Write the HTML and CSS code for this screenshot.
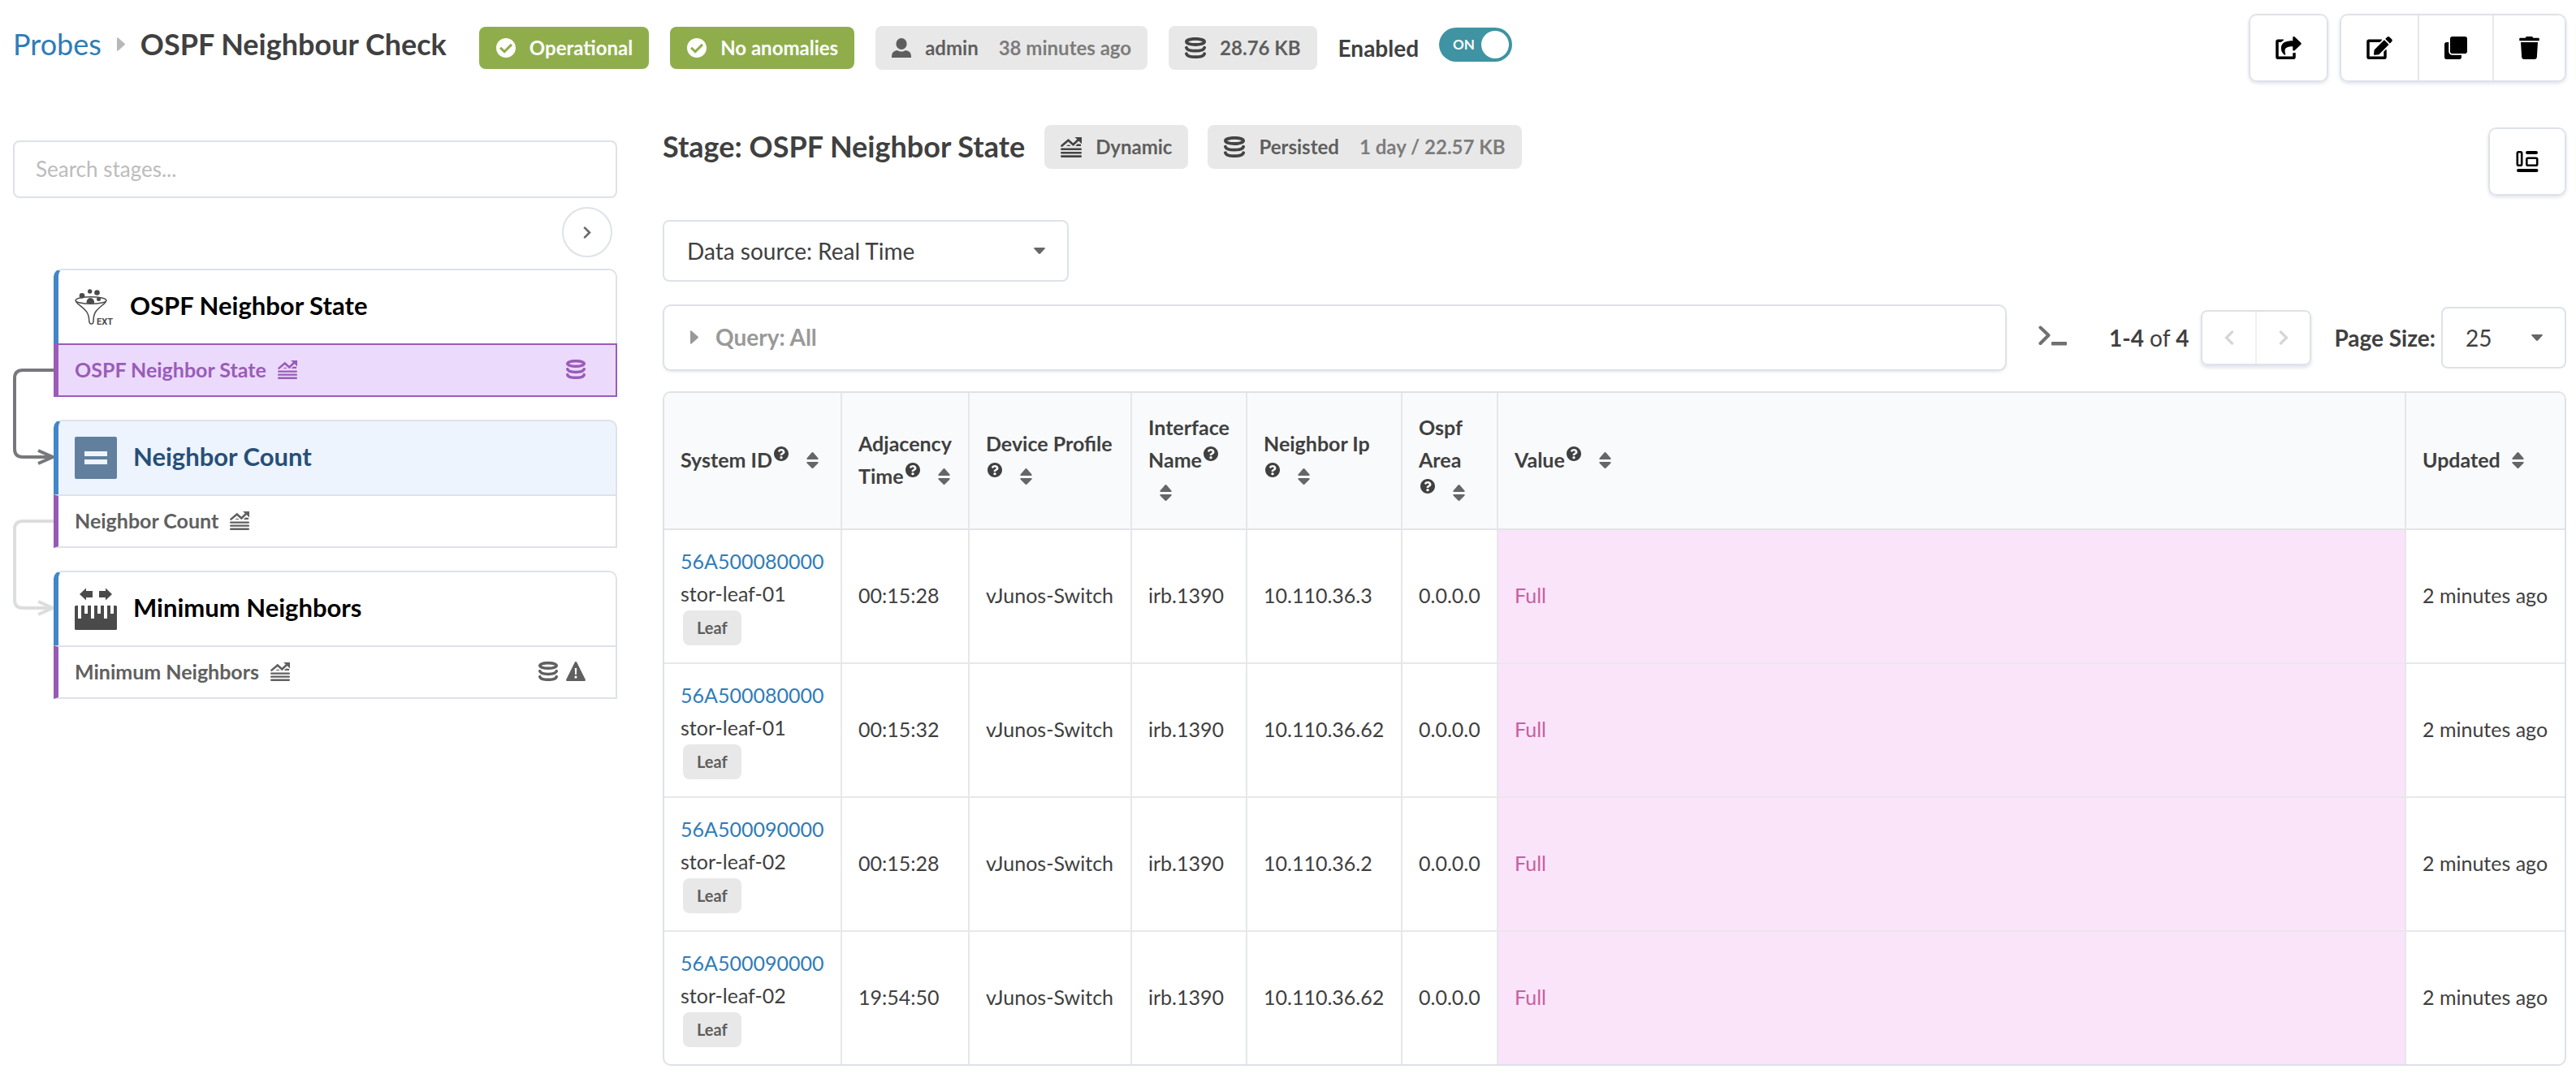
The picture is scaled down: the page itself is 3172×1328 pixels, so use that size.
FILE: index.html
```html
<!DOCTYPE html>
<html lang="en">
<head>
<meta charset="utf-8">
<title>OSPF Neighbour Check</title>
<link rel="stylesheet" href="styles.css">
</head>
<body>
<svg class="sprite" aria-hidden="true">
  <symbol id="check" viewBox="8 8 496 496"><path d="M504 256c0 136.967-111.033 248-248 248S8 392.967 8 256 119.033 8 256 8s248 111.033 248 248zM227.314 387.314l184-184c6.248-6.248 6.248-16.379 0-22.627l-22.627-22.627c-6.248-6.249-16.379-6.249-22.628 0L216 308.118l-70.059-70.059c-6.248-6.248-16.379-6.248-22.628 0l-22.627 22.627c-6.248 6.248-6.248 16.379 0 22.627l104 104c6.249 6.249 16.379 6.249 22.628.001z"/></symbol>
  <symbol id="user" viewBox="0 0 24 24"><ellipse cx="12" cy="7" rx="6.6" ry="7"/><path d="M7 15q5 3 10 0q7 1 7 7v2H0v-2q0-6 7-7z"/></symbol>
  <symbol id="db" viewBox="0 0 26 26"><g fill="none" stroke="currentColor" stroke-width="3.8" stroke-linecap="round"><ellipse cx="13" cy="5.400" rx="11.100" ry="3.600"/><path d="M1.900 12.700C3.500 18 22.500 18 24.100 12.700M1.900 20.200C3.500 25.500 22.500 25.500 24.100 20.200"/></g></symbol>
  <symbol id="chart" viewBox="0 0 26 26"><path d="M1.600 11.500 9.500 4.800l6 5.400L23 3" fill="none" stroke="currentColor" stroke-width="2.800" stroke-linecap="round"/><path d="M17.500 1H26v8.200zM7 12q3-2.800 5.500 0zM18 12l3-2.800 4 .5V12z"/><path d="M1.300 15.800h23.400M1.300 20.200h23.400M1.300 24.600h23.400" stroke="currentColor" stroke-width="2.600" stroke-linecap="round"/></symbol>
  <symbol id="share" viewBox="0 0 576 512"><path d="M568.482 177.448L424.479 313.433C409.3 327.768 384 317.14 384 295.985v-71.963c-144.575.97-205.566 35.113-164.775 171.353 4.483 14.973-12.846 26.567-25.006 17.33C155.252 383.105 120 326.488 120 269.339c0-143.937 117.599-172.5 264-173.312V24.012c0-21.174 25.317-31.768 40.479-17.448l144.003 135.988c10.02 9.463 10.028 25.425 0 34.896zM384 379.128V448H64V128h50.916a11.99 11.99 0 0 0 8.648-3.693c14.953-15.568 32.237-27.89 51.014-37.676C185.708 80.83 181.584 64 169.033 64H48C21.49 64 0 85.49 0 112v352c0 26.51 21.49 48 48 48h352c26.51 0 48-21.49 48-48v-88.806c0-8.288-8.197-14.066-16.011-11.302a71.83 71.83 0 0 1-34.189 3.377c-7.27-1.046-13.8 4.514-13.8 11.859z"/></symbol>
  <symbol id="edit" viewBox="0 0 576 512"><path d="M402.6 83.2l90.2 90.2c3.8 3.8 3.8 10 0 13.8L274.4 405.6l-92.8 10.3c-12.4 1.4-22.9-9.1-21.5-21.5l10.3-92.8L388.8 83.2c3.8-3.8 10-3.8 13.8 0zm162-22.9l-48.8-48.8c-15.2-15.2-39.9-15.2-55.2 0l-35.4 35.4c-3.8 3.8-3.8 10 0 13.8l90.2 90.2c3.8 3.8 10 3.8 13.8 0l35.4-35.4c15.2-15.3 15.2-40 0-55.2zM384 346.2V448H64V128h229.8c3.2 0 6.2-1.3 8.5-3.5l40-40c7.6-7.6 2.2-20.5-8.5-20.5H48C21.5 64 0 85.5 0 112v352c0 26.5 21.5 48 48 48h352c26.5 0 48-21.5 48-48V306.2c0-10.7-12.9-16-20.5-8.500l-40 40c-2.200 2.300-3.500 5.300-3.500 8.500z"/></symbol>
  <symbol id="clone" viewBox="0 0 512 512"><path d="M464 0c26.510 0 48 21.490 48 48v288c0 26.510-21.490 48-48 48H176c-26.510 0-48-21.490-48-48V48c0-26.510 21.490-48 48-48h288M176 416c-44.112 0-80-35.888-80-80V128H48c-26.510 0-48 21.490-48 48v288c0 26.510 21.490 48 48 48h288c26.510 0 48-21.490 48-48v-48H176z"/></symbol>
  <symbol id="trash" viewBox="0 0 448 512"><path d="M432 32H312l-9.400-18.700A24 24 0 0 0 281.100 0H166.800a23.720 23.720 0 0 0-21.400 13.300L136 32H16A16 16 0 0 0 0 48v32a16 16 0 0 0 16 16h416a16 16 0 0 0 16-16V48a16 16 0 0 0-16-16zM53.200 467a48 48 0 0 0 47.900 45h245.800a48 48 0 0 0 47.900-45L416 128H32z"/></symbol>
  <symbol id="layout" viewBox="0 0 27 26"><g fill="none" stroke="currentColor" stroke-width="2.600"><rect x="1.300" y="1.300" width="5.400" height="16.400" rx="1.500"/><rect x="12.800" y="8.800" width="12.900" height="8.900" rx="1.500"/></g><path d="M13.500 2h11M2.500 24h22.500" stroke="currentColor" stroke-width="4" stroke-linecap="round"/></symbol>
  <symbol id="help" viewBox="8 8 496 496"><path d="M504 256c0 136.997-111.043 248-248 248S8 392.997 8 256C8 119.083 119.043 8 256 8s248 111.083 248 248zM262.655 90c-54.497 0-89.255 22.957-116.549 63.758-3.536 5.286-2.353 12.415 2.715 16.258l34.699 26.310c5.205 3.947 12.621 3.008 16.665-2.122 17.864-22.658 30.113-35.797 57.303-35.797 20.429 0 45.698 13.148 45.698 32.958 0 14.976-12.363 22.667-32.534 33.976C247.128 238.528 216 254.941 216 296v4c0 6.627 5.373 12 12 12h56c6.627 0 12-5.373 12-12v-1.333c0-28.462 83.186-29.647 83.186-106.667 0-58.002-60.165-102-116.531-102zM256 338c-25.365 0-46 20.635-46 46 0 25.364 20.635 46 46 46s46-20.636 46-46c0-25.365-20.635-46-46-46z"/></symbol>
  <symbol id="sort" viewBox="0 0 15 20"><path d="M7.500 0q.6 0 1 .5l6 7q.8 1.500-1 1.500h-12q-1.800 0-1-1.500l6-7q.4-.5 1-.5zM7.500 20q.6 0 1-.5l6-6q.8-1.500-1-1.500h-12q-1.800 0-1 1.500l6 6q.4.5 1 .5z"/></symbol>
  <symbol id="caret" viewBox="0 0 14 8"><path d="M1 0h12q1.500.5.5 1.600L8 7.500q-1 .8-2 0L.5 1.600Q-.5.500 1 0z"/></symbol>
  <symbol id="tri" viewBox="0 0 10 17"><path d="M0 1q.2-1.200 1.400-.5l8 7q1 1 0 2l-8 7q-1.200.7-1.400-.5z"/></symbol>
  <symbol id="chev" viewBox="0 0 12 18"><path d="m2.500 2 7 7-7 7" fill="none" stroke="currentColor" stroke-width="3.200" stroke-linecap="round"/></symbol>
  <symbol id="chevleft" viewBox="0 0 12 18"><path d="m9.500 2-7 7 7 7" fill="none" stroke="currentColor" stroke-width="3.200" stroke-linecap="round"/></symbol>
  <symbol id="terminal" viewBox="0 0 35 26"><path d="m2.500 2.500 10 9.500-10 10" fill="none" stroke="currentColor" stroke-width="4" stroke-linecap="round" stroke-linejoin="round"/><rect x="16" y="20" width="19" height="4.500" rx="1"/></symbol>
  <symbol id="warn" viewBox="0 0 24 24"><path fill-rule="evenodd" d="M12 0q.8 0 1.300 1L24 22.500q0 1.500-1.500 1.500h-21Q0 24 0 22.500L10.700 1Q11.200 0 12 0zM10.800 8l.3 8h1.800l.3-8zM12 17.500a1.600 1.600 0 1 0 0 3.200 1.600 1.600 0 1 0 0-3.200z"/></symbol>
  <symbol id="equal" viewBox="0 0 52 52"><path fill-rule="evenodd" d="M2 0h48q2 0 2 2v48q0 2-2 2H2q-2 0-2-2V2Q0 0 2 0zM12 18v6h28v-6zM12 28v6h28v-6z"/></symbol>
  <symbol id="ruler" viewBox="0 0 52 52"><path d="M6 8l8-7.500V4h8v8h-8v3.500zM46 8l-8-7.500V4h-8v8h8v3.500zM1.500 22H4v16h4V22h4v10h4V22h4v16h4V22h4v10h4V22h4v16h4V22h4v10h4V22h2.500Q52 22 52 23.500v27q0 1.500-1.500 1.500h-49Q0 52 0 50.500v-27Q0 22 1.500 22z"/></symbol>
</svg>

<header class="topbar">
  <nav class="crumbs">
    <a href="#probes">Probes</a>
    <svg class="crumb-sep"><use href="#tri"/></svg>
    <h1>OSPF Neighbour Check</h1>
  </nav>
  <div class="labels">
    <span class="label ok"><svg><use href="#check"/></svg>Operational</span>
    <span class="label ok"><svg><use href="#check"/></svg>No anomalies</span>
    <span class="label"><svg><use href="#user"/></svg>admin<span class="detail">38 minutes ago</span></span>
    <span class="label"><svg class="dark"><use href="#db"/></svg>28.76 KB</span>
    <label class="toggle">Enabled
      <span class="switch"><input type="checkbox" checked><span class="on">ON</span></span>
    </label>
  </div>
  <div class="actions">
    <div class="group"><button type="button" aria-label="Export"><svg class="w32"><use href="#share"/></svg></button></div>
    <div class="group">
      <button type="button" aria-label="Edit"><svg class="w32"><use href="#edit"/></svg></button>
      <button type="button" aria-label="Clone"><svg class="w28"><use href="#clone"/></svg></button>
      <button type="button" aria-label="Delete"><svg class="w25"><use href="#trash"/></svg></button>
    </div>
  </div>
</header>

<div class="columns">
  <aside class="stages">
    <input class="search" type="text" placeholder="Search stages..." aria-label="Search stages">
    <button class="expand" type="button" aria-label="Expand"><svg><use href="#chev"/></svg></button>
    <div class="flow">
      <svg class="links" viewBox="0 0 50 530" aria-hidden="true">
        <g class="link"><path d="M50 125H12Q2 125 2 135V222Q2 232 12 232H48"/><path d="M31 224 49 232 31 240"/></g>
        <g class="link faint"><path d="M50 311H12Q2 311 2 321V408Q2 418 12 418H48"/><path d="M31 410 49 418 31 426"/></g>
      </svg>
      <div class="cards">
        <section class="card">
          <h2>
            <svg class="funnel" viewBox="0 0 48 44">
              <g fill="none" stroke="currentColor" stroke-width="1.500"><ellipse cx="20" cy="14" rx="19" ry="4.300"/><path d="M1.500 15.500C7 23 17.500 24 17.800 39.500q.2 3.500 2.700 3.500t2.500-3.500C23 24 33 23 38.500 15.500"/></g>
              <circle cx="9" cy="8.300" r="3.300"/><circle cx="18.700" cy="3" r="2.700"/><circle cx="27.500" cy="4.500" r="3.300"/><circle cx="29.500" cy="12.500" r="2.500"/><path d="M14.500 17.500q0-6.500 4.800-6.500t4.800 6.500q-5 .8-9.600 0z"/>
              <text x="27" y="43.500">EXT</text>
            </svg>
            OSPF Neighbor State</h2>
          <div class="output selected">OSPF Neighbor State<svg><use href="#chart"/></svg><span class="flags"><svg><use href="#db"/></svg></span></div>
        </section>
        <section class="card current">
          <h2><svg class="big"><use href="#equal"/></svg>Neighbor Count</h2>
          <div class="output">Neighbor Count<svg><use href="#chart"/></svg></div>
        </section>
        <section class="card">
          <h2><svg class="big"><use href="#ruler"/></svg>Minimum Neighbors</h2>
          <div class="output">Minimum Neighbors<svg><use href="#chart"/></svg><span class="flags"><svg><use href="#db"/></svg><svg><use href="#warn"/></svg></span></div>
        </section>
      </div>
    </div>
  </aside>

  <main>
    <div class="stage-head">
      <div class="stage-title">
        <h2>Stage: OSPF Neighbor State</h2>
        <span class="label"><svg class="dark"><use href="#chart"/></svg>Dynamic</span>
        <span class="label"><svg class="dark"><use href="#db"/></svg>Persisted<span class="detail">1 day / 22.57 KB</span></span>
      </div>
      <div class="group"><button type="button" aria-label="Layout"><svg class="w30"><use href="#layout"/></svg></button></div>
    </div>

    <div class="pick source">
      <select aria-label="Data source"><option>Data source: Real Time</option></select>
      <svg><use href="#caret"/></svg>
    </div>

    <div class="toolbar">
      <button class="query" type="button"><svg><use href="#tri"/></svg>Query: All</button>
      <button class="console" type="button" aria-label="Console"><svg><use href="#terminal"/></svg></button>
      <span class="count"><b>1-4</b> of <b>4</b></span>
      <div class="pager">
        <button type="button" disabled aria-label="Previous page"><svg><use href="#chevleft"/></svg></button>
        <button type="button" disabled aria-label="Next page"><svg><use href="#chev"/></svg></button>
      </div>
      <label class="size-label" for="size">Page Size:</label>
      <div class="pick size">
        <select id="size"><option>25</option></select>
        <svg><use href="#caret"/></svg>
      </div>
    </div>

    <table>
      <colgroup><col class="c-system"><col class="c-time"><col class="c-profile"><col class="c-iface"><col class="c-ip"><col class="c-area"><col><col class="c-updated"></colgroup>
      <thead>
        <tr>
          <th>System ID<svg class="help"><use href="#help"/></svg> <svg class="sort"><use href="#sort"/></svg></th>
          <th>Adjacency<br>Time<svg class="help"><use href="#help"/></svg> <svg class="sort"><use href="#sort"/></svg></th>
          <th>Device Profile<br><svg class="help"><use href="#help"/></svg> <svg class="sort"><use href="#sort"/></svg></th>
          <th>Interface<br>Name<svg class="help"><use href="#help"/></svg><br><svg class="sort"><use href="#sort"/></svg></th>
          <th>Neighbor Ip<br><svg class="help"><use href="#help"/></svg> <svg class="sort"><use href="#sort"/></svg></th>
          <th>Ospf<br>Area<br><svg class="help"><use href="#help"/></svg> <svg class="sort"><use href="#sort"/></svg></th>
          <th>Value<svg class="help"><use href="#help"/></svg> <svg class="sort"><use href="#sort"/></svg></th>
          <th>Updated<svg class="sort"><use href="#sort"/></svg></th>
        </tr>
      </thead>
      <tbody>
        <tr><td class="system"><a href="#s1">56A500080000</a><span>stor-leaf-01</span><span class="role">Leaf</span></td><td>00:15:28</td><td>vJunos-Switch</td><td>irb.1390</td><td>10.110.36.3</td><td>0.0.0.0</td><td class="value">Full</td><td>2 minutes ago</td></tr>
        <tr><td class="system"><a href="#s1">56A500080000</a><span>stor-leaf-01</span><span class="role">Leaf</span></td><td>00:15:32</td><td>vJunos-Switch</td><td>irb.1390</td><td>10.110.36.62</td><td>0.0.0.0</td><td class="value">Full</td><td>2 minutes ago</td></tr>
        <tr><td class="system"><a href="#s2">56A500090000</a><span>stor-leaf-02</span><span class="role">Leaf</span></td><td>00:15:28</td><td>vJunos-Switch</td><td>irb.1390</td><td>10.110.36.2</td><td>0.0.0.0</td><td class="value">Full</td><td>2 minutes ago</td></tr>
        <tr><td class="system"><a href="#s2">56A500090000</a><span>stor-leaf-02</span><span class="role">Leaf</span></td><td>19:54:50</td><td>vJunos-Switch</td><td>irb.1390</td><td>10.110.36.62</td><td>0.0.0.0</td><td class="value">Full</td><td>2 minutes ago</td></tr>
      </tbody>
    </table>
  </main>
</div>
</body>
</html>
```
FILE: styles.css
```css
* { box-sizing: border-box; }

body {
  margin: 0;
  padding: 17px 12px 12px 16px;
  background: #fff;
  color: #404040;
  font: 28px/40px Lato, "Liberation Sans", sans-serif;
}

svg { display: block; fill: currentColor; flex: none; }
.sprite { display: none; }
h1, h2 { margin: 0; font-size: 36px; line-height: 44px; font-weight: 700; }
a { color: #2f7cb8; text-decoration: none; }
button, select, input { font: inherit; color: inherit; margin: 0; }
button { display: flex; align-items: center; justify-content: center; padding: 0; border: 0; background: #fff; }

/* top bar */
.topbar { display: flex; align-items: center; gap: 40px; height: 84px; }
.crumbs { display: flex; align-items: center; gap: 19px; padding-bottom: 10px; font-size: 36px; white-space: nowrap; }
.crumb-sep { width: 10px; height: 17px; color: #b8b8b8; }
.labels { display: flex; align-items: center; gap: 26px; flex: 1; }

.label {
  display: flex; align-items: center; gap: 17px;
  height: 54px; padding: 0 20px;
  border-radius: 8px;
  background: #e8e8e8; color: #5e5e5e;
  font-size: 24px; font-weight: 700; white-space: nowrap;
}
.label svg { width: 24px; height: 24px; }
.label svg.dark { width: 26px; height: 26px; color: #444; }
.label.ok { height: 52px; padding: 0 20px 0 21px; background: #8fae4b; color: #fff; }
.detail { margin-left: 8px; color: #7c7c7c; }

.toggle { display: flex; align-items: center; gap: 25px; font-weight: 700; font-size: 28px; }
.switch { display: grid; align-items: center; padding-bottom: 8px; }
.switch > * { grid-area: 1 / 1; }
.switch input {
  appearance: none;
  width: 90px; height: 42px; padding: 4px;
  border-radius: 21px; background: #3f93a2;
}
.switch input::before {
  content: ""; display: block;
  width: 34px; height: 34px; margin-left: auto;
  border-radius: 50%; background: #fff;
}
.on { padding-left: 17px; color: #fff; font-size: 17px; line-height: 42px; }

.actions { display: flex; gap: 14px; }
.group { display: flex; border: 2px solid #dee2e8; border-radius: 10px; box-shadow: 0 2px 4px #dfe3ea; overflow: hidden; color: #000; }
.group button { height: 80px; padding: 0 31px; }
.group button + button { border-left: 2px solid #e6e8ea; }
.w32 { width: 32px; height: 28px; }
.w28 { width: 28px; height: 28px; }
.w25 { width: 25px; height: 28px; }
.w30 { width: 30px; height: 26px; }

/* stages list */
.columns { display: grid; grid-template-columns: 744px minmax(0, 1fr); gap: 56px; padding-top: 53px; }
.stages { display: flex; flex-direction: column; padding-top: 19px; }
.search { padding: 14px 26px 15px; border: 2px solid #dee2e8; border-radius: 8px; background: #fff; font-size: 26px; line-height: 38px; outline: 0; }
.search::placeholder { color: #bcbcbc; opacity: 1; }
.expand { align-self: flex-end; width: 62px; height: 62px; margin: 11px 6px 14px; border: 2px solid #dee2e8; border-radius: 50%; color: #6a6a6a; }
.expand svg { width: 10px; height: 15px; }
.flow { display: flex; align-items: flex-start; }
.links { width: 50px; height: 530px; }
.link { fill: none; stroke: #77787b; stroke-width: 4; }
.link.faint { stroke: #dcdddf; }
.cards { flex: 1; display: grid; gap: 28px; }
.card h2 {
  display: flex; align-items: center; gap: 20px;
  height: 92px; padding: 0 0 5px 20px;
  border: 2px solid #dee2e8; border-left: 6px solid #4186c9; border-bottom: 0;
  border-radius: 10px 10px 0 0;
  color: #000; font-size: 31px;
}
.card h2 svg { margin-top: 5px; color: #4a4a4a; }
.current h2 { background: #edf4fd; color: #264f78; }
.current h2 svg { color: #637f9e; }
.funnel { width: 48px; height: 44px; }
.funnel text { font: 700 11px Roboto, sans-serif; }
.big { width: 52px; height: 52px; }
.output {
  display: flex; align-items: center; gap: 14px;
  height: 66px; padding: 0 37px 2px 20px;
  border: 2px solid #dee2e8; border-left: 6px solid #965ab6;
  color: #606060; font-size: 25px; font-weight: 700;
}
.output svg { width: 24px; height: 24px; }
.output.selected { border-color: #9a5cb8; background: #ebdafc; color: #9a5cb8; }
.flags { display: flex; gap: 10px; margin-left: auto; }

/* stage details */
.stage-head { display: flex; justify-content: space-between; align-items: flex-start; padding-top: 3px; }
.stage-title { display: flex; align-items: center; gap: 24px; height: 48px; }
.stage-title h2 { padding-bottom: 2px; white-space: nowrap; }
main { min-width: 0; }

.pick { display: grid; align-items: center; }
.pick > * { grid-area: 1 / 1; }
.pick select { appearance: none; width: 100%; height: 76px; padding: 0 28px; border: 2px solid #dee2e8; border-radius: 8px; background: #fff; }
.pick svg { justify-self: end; width: 14px; height: 8px; margin-right: 29px; color: #666; pointer-events: none; }
.source { width: 500px; margin-top: 30px; }
.size { width: 154px; }

.toolbar { display: flex; align-items: center; margin: 28px 0 25px; white-space: nowrap; }
.query { flex: 1; justify-content: flex-start; gap: 21px; height: 82px; padding: 0 0 2px 32px; border: 2px solid #dee2e8; border-radius: 10px; box-shadow: 0 2px 3px #eceef2; color: #999; font-weight: 700; }
.query svg { width: 10px; height: 17px; }
.console { margin: 0 52px 0 39px; padding-bottom: 4px; color: #707070; }
.console svg { width: 35px; height: 26px; }
.pager { display: flex; width: 136px; height: 68px; margin: 0 28px 0 15px; border: 2px solid #dee2e8; border-radius: 8px; box-shadow: 0 3px 4px #dfe3ea; overflow: hidden; color: #d6d6d6; }
.pager button { flex: 1; color: inherit; }
.pager button + button { border-left: 2px solid #f0f0f0; }
.pager svg { width: 12px; height: 18px; }
.size-label { margin-right: 7px; font-weight: 700; }

table { width: 100%; table-layout: fixed; border: 2px solid #dee2e8; border-radius: 10px; border-spacing: 0; overflow: hidden; font-size: 25px; }
.c-system { width: 217px; }
.c-time { width: 157px; }
.c-profile { width: 200px; }
.c-iface { width: 142px; }
.c-ip { width: 191px; }
.c-area { width: 118px; }
.c-updated { width: 197px; }
th, td { padding: 18px 0 21px 20px; text-align: left; white-space: nowrap; }
th { padding: 22px 0 25px 20px; background: #f9fafb; border-bottom: 2px solid #e2e4e7; }
th + th, td + td { border-left: 2px solid #e6e7e8; }
tbody tr + tr td { border-top: 2px solid #e8e8e8; }
th svg { display: inline-block; }
.help { width: 18px; height: 18px; margin: 0 2px; vertical-align: 8px; }
.sort { width: 15px; height: 20px; margin-left: 14px; vertical-align: -1px; color: #666; }
.system > * { display: block; }
.system .role { width: max-content; margin: 1px 0 0 3px; padding: 0 17px; border-radius: 8px; background: #e8e8e8; color: #5e5e5e; font-size: 20px; font-weight: 700; line-height: 43px; }
.value { background: #fae4fa; color: #c562a0; }
```
